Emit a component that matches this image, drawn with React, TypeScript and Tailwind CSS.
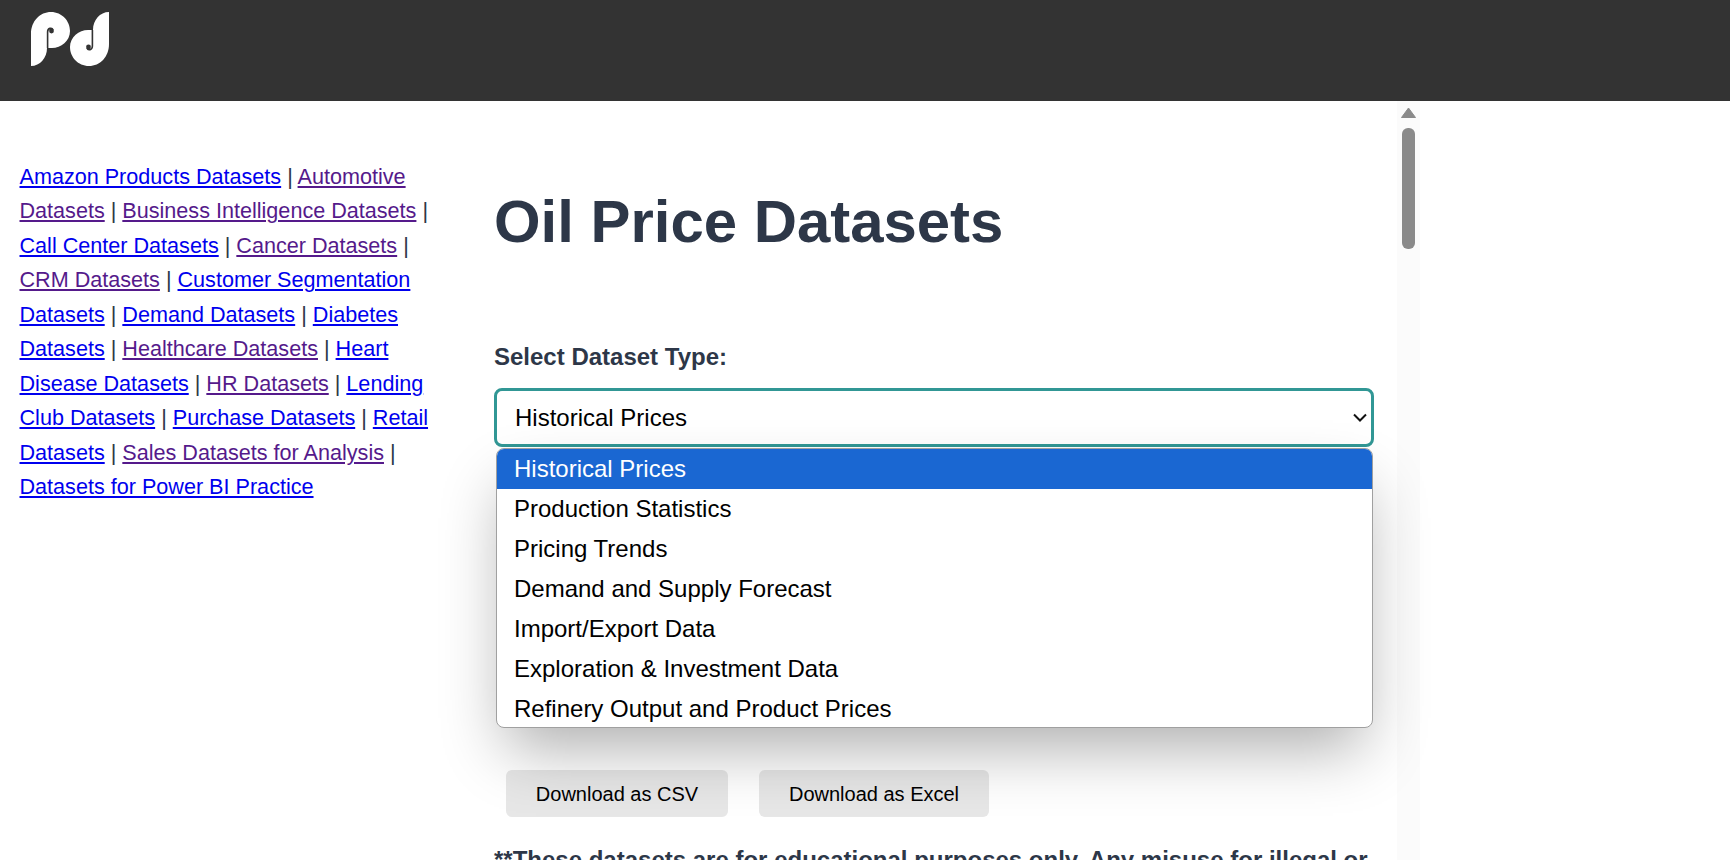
const sidebarLinks: [string, boolean][] = [
  ["Amazon Products Datasets", false],
  ["Automotive Datasets", true],
  ["Business Intelligence Datasets", true],
  ["Call Center Datasets", false],
  ["Cancer Datasets", true],
  ["CRM Datasets", true],
  ["Customer Segmentation Datasets", false],
  ["Demand Datasets", false],
  ["Diabetes Datasets", false],
  ["Healthcare Datasets", true],
  ["Heart Disease Datasets", false],
  ["HR Datasets", true],
  ["Lending Club Datasets", false],
  ["Purchase Datasets", false],
  ["Retail Datasets", false],
  ["Sales Datasets for Analysis", true],
  ["Datasets for Power BI Practice", false],
];

const options = [
  "Historical Prices",
  "Production Statistics",
  "Pricing Trends",
  "Demand and Supply Forecast",
  "Import/Export Data",
  "Exploration & Investment Data",
  "Refinery Output and Product Prices",
];

function LogoLetter() {
  return (
    <>
      <path fill="#fff" d="M6 58 V26 C6 13 15 4 26 4 C37 4 45 13 45 23 C45 33 36 40 27 40 H22 C22 50 15 58 6 58 Z" />
      <path fill="none" stroke="#333" strokeWidth="1.6" d="M22.6 40 V24 C22.6 20 27 19 28 22" />
      <circle cx="26.5" cy="23" r="2.4" fill="#333" />
    </>
  );
}

function Logo() {
  return (
    <svg width="90" height="62" viewBox="0 0 90 62" className="ml-[25px]">
      <LogoLetter />
      <g transform="rotate(180 45 31)">
        <LogoLetter />
      </g>
    </svg>
  );
}

export default function App() {
  return (
    <div className="h-[860px] overflow-hidden bg-white font-['Liberation_Sans',Arial,sans-serif]">
      <header className="h-[101px] bg-[#333333] pt-2">
        <Logo />
      </header>

      <div className="flex">
        <aside className="w-[494px] shrink-0 pl-[19.5px] pr-[60px] pt-[59px] text-[21.6px] leading-[34.45px] text-[#2d3748]">
          {sidebarLinks.map(([label, visited], i) => (
            <span key={label}>
              <a href="#" className={visited ? "text-[#551a8b] underline" : "text-[#0000ee] underline"}>
                {label}
              </a>
              {i < sidebarLinks.length - 1 ? " | " : ""}
            </span>
          ))}
        </aside>

        <main className="w-[880px] shrink-0">
          <h1 className="mt-[86px] text-[59.9px] leading-[70px] font-bold text-[#2d3748]">Oil Price Datasets</h1>
          <label className="mt-[86px] block text-[24px] leading-[28px] font-bold text-[#2d3748]">Select Dataset Type:</label>

          <div className="relative mt-[17px]">
            <div className="flex h-[59px] items-center justify-between rounded-lg border-[3px] border-[#319795] pl-[18px] pr-[4px] text-[24px] text-black">
              <span>Historical Prices</span>
              <svg width="14" height="9" viewBox="0 0 14 9" fill="none" stroke="#111" strokeWidth="2">
                <path d="M1 1.5 L7 7.5 L13 1.5" />
              </svg>
            </div>

            <ul className="absolute top-[60px] left-[2px] right-[1px] z-10 h-[280px] overflow-hidden rounded-lg border border-[#a0a0a0] bg-white text-[24px] leading-[40px] text-black shadow-[0_30px_60px_-10px_rgba(0,0,0,0.32)]">
              {options.map((opt, i) => (
                <li key={opt} className={i === 0 ? "h-10 bg-[#1a67d2] pl-[17px] text-white" : "h-10 pl-[17px]"}>
                  {opt}
                </li>
              ))}
            </ul>
          </div>

          <div className="mt-[323px] flex gap-[31px] pl-2">
            <button className="ml-1 h-[47px] w-[222px] rounded-md bg-[#e7e7e7] text-[20px] text-black">Download as CSV</button>
            <button className="h-[47px] w-[230px] rounded-md bg-[#e7e7e7] text-[20px] text-black">Download as Excel</button>
          </div>

          <p className="mt-[29px] whitespace-nowrap text-[24px] leading-[28px] font-bold text-[#2d3748]">
            **These datasets are for educational purposes only. Any misuse for illegal or
          </p>
        </main>

        {/* fake scrollbar */}
        <div className="relative ml-[23px] h-[759px] w-[23px] shrink-0 bg-[#fbfbfb]">
          <svg width="15" height="11" viewBox="0 0 15 11" className="absolute top-[6px] left-[4px]">
            <path fill="#8a8a8a" d="M7.5 1 L14.5 10.5 H0.5 Z" stroke="#8a8a8a" strokeLinejoin="round" />
          </svg>
          <div className="absolute top-[27px] left-[5px] h-[121px] w-[13px] rounded-md bg-[#8a8a8a]" />
        </div>
      </div>
    </div>
  );
}
